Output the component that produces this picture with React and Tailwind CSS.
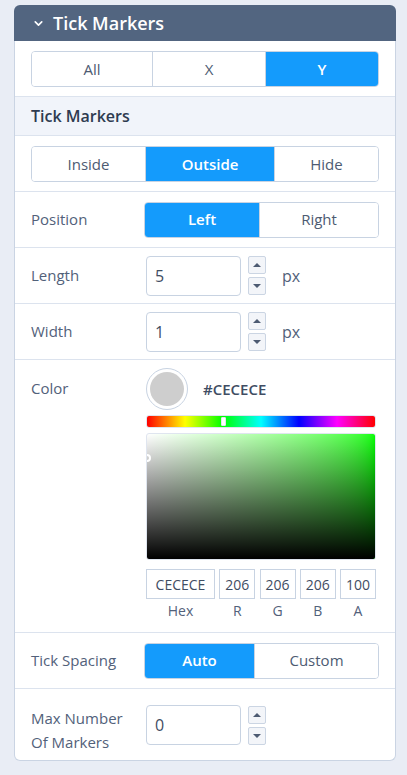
import { ChevronDown } from 'lucide-react';

const font = { fontFamily: '"Open Sans", "Liberation Sans", sans-serif' };

function Segmented({ options, active, widths }) {
  return (
    <div className="flex h-[36px] rounded-[4px] border border-[#c8d3e2] overflow-hidden">
      {options.map((opt, i) => (
        <div
          key={opt}
          className={`${widths[i]} flex items-center justify-center text-[15px] ${
            i > 0 ? 'border-l border-[#c8d3e2]' : ''
          } ${
            opt === active
              ? 'bg-[#149bfc] text-white font-semibold border-[#0d84dc]'
              : 'bg-white text-[#4d5b72]'
          }`}
        >
          {opt}
        </div>
      ))}
    </div>
  );
}

function Spinner() {
  return (
    <div className="flex flex-col gap-[3px]">
      <div className="w-[18px] h-[18px] flex items-center justify-center bg-[#f3f5f9] border border-[#cbd5e3] rounded-[2px]">
        <div className="w-0 h-0 border-x-[4px] border-x-transparent border-b-[4px] border-b-[#4d5b72]" />
      </div>
      <div className="w-[18px] h-[18px] flex items-center justify-center bg-[#f3f5f9] border border-[#cbd5e3] rounded-[2px]">
        <div className="w-0 h-0 border-x-[4px] border-x-transparent border-t-[4px] border-t-[#4d5b72]" />
      </div>
    </div>
  );
}

function NumberRow({ label, value, unit }) {
  return (
    <div className="flex items-center h-[56px] px-[16px] border-t border-[#dce3ee]">
      <div className="w-[115px] text-[15px] text-[#52617a]">{label}</div>
      <div className="w-[95px] h-[40px] border border-[#c8d3e2] rounded-[4px] flex items-center pl-[8px] text-[16px] text-[#3f4d63]">
        {value}
      </div>
      <div className="ml-[7px]">
        <Spinner />
      </div>
      {unit && <div className="ml-[16px] text-[16px] text-[#52617a]">{unit}</div>}
    </div>
  );
}

function ChannelBox({ value, label, w }) {
  return (
    <div className="flex flex-col items-center">
      <div className={`${w} h-[30px] border border-[#c8d3e2] flex items-center justify-center text-[14px] text-[#3f4d63]`}>
        {value}
      </div>
      <div className="mt-[3px] text-[14px] leading-[18px] text-[#52617a]">{label}</div>
    </div>
  );
}

export default function App() {
  return (
    <div className="min-h-[775px] bg-[#e9edf5] pt-[5px] pl-[14px]" style={font}>
      <div className="w-[382px]">
        <div className="h-[36px] bg-[#526580] rounded-t-[6px] flex items-center pl-[18px]">
          <ChevronDown className="w-[13px] h-[13px] text-white" strokeWidth={3} />
          <span className="ml-[8px] text-[18px] font-semibold text-white">Tick Markers</span>
        </div>
        <div className="bg-white border-x border-b border-[#cad4e3] rounded-b-[6px]">
          <div className="px-[16px] pt-[10px] pb-[9px]">
            <Segmented options={['All', 'X', 'Y']} active="Y" widths={['w-[120px]', 'w-[113px]', 'flex-1']} />
          </div>
          <div className="h-[39px] bg-[#f1f4fa] border-t border-[#dce3ee] flex items-center px-[16px] text-[16px] font-semibold text-[#2e3b50]">
            Tick Markers
          </div>
          <div className="px-[16px] pt-[10px] pb-[9px] border-t border-[#dce3ee]">
            <Segmented options={['Inside', 'Outside', 'Hide']} active="Outside" widths={['w-[113px]', 'w-[129px]', 'flex-1']} />
          </div>
          <div className="flex items-center h-[56px] px-[16px] border-t border-[#dce3ee]">
            <div className="w-[113px] text-[15px] text-[#52617a]">Position</div>
            <div className="flex-1">
              <Segmented options={['Left', 'Right']} active="Left" widths={['w-[114px]', 'flex-1']} />
            </div>
          </div>
          <NumberRow label="Length" value="5" unit="px" />
          <NumberRow label="Width" value="1" unit="px" />
          <div className="flex px-[16px] pt-[8px] pb-[12px] border-t border-[#dce3ee]">
            <div className="w-[115px] pt-[9px] text-[15px] text-[#52617a]">Color</div>
            <div className="w-[230px]">
              <div className="flex items-center">
                <div className="w-[42px] h-[42px] rounded-full border border-[#c8d3e2] flex items-center justify-center">
                  <div className="w-[34px] h-[34px] rounded-full bg-[#cecece]" />
                </div>
                <div className="ml-[15px] text-[15px] font-semibold text-[#3f4d63]">#CECECE</div>
              </div>
              <div className="relative mt-[5px] h-[13px] rounded-[3px] border border-[#dfe5ef] bg-[linear-gradient(to_right,#f00,#ff0,#0f0,#0ff,#00f,#f0f,#f00)]">
                <div className="absolute left-[74px] top-[1px] w-[5px] h-[9px] bg-white rounded-[1px] border border-[#dfe5ef]" />
              </div>
              <div className="relative mt-[5px] h-[127px] rounded-[3px] border border-[#dfe5ef] overflow-hidden bg-linear-to-r from-white to-[#00ff00]">
                <div className="absolute inset-0 bg-linear-to-t from-black to-transparent" />
                <div className="absolute left-[-4px] top-[20px] w-[8px] h-[8px] rounded-full border-2 border-white" />
              </div>
              <div className="flex justify-between mt-[9px]">
                <ChannelBox value="CECECE" label="Hex" w="w-[69px]" />
                <ChannelBox value="206" label="R" w="w-[36px]" />
                <ChannelBox value="206" label="G" w="w-[36px]" />
                <ChannelBox value="206" label="B" w="w-[36px]" />
                <ChannelBox value="100" label="A" w="w-[36px]" />
              </div>
            </div>
          </div>
          <div className="flex items-center h-[56px] px-[16px] border-t border-[#dce3ee]">
            <div className="w-[113px] text-[15px] text-[#52617a]">Tick Spacing</div>
            <div className="flex-1">
              <Segmented options={['Auto', 'Custom']} active="Auto" widths={['w-[109px]', 'flex-1']} />
            </div>
          </div>
          <div className="flex items-start h-[72px] px-[16px] pt-[16px] border-t border-[#dce3ee]">
            <div className="w-[115px] pt-[1px] text-[15px] leading-[24px] text-[#52617a]">
              Max Number
              <br />
              Of Markers
            </div>
            <div className="w-[95px] h-[40px] border border-[#c8d3e2] rounded-[4px] flex items-center pl-[8px] text-[16px] text-[#3f4d63]">
              0
            </div>
            <div className="ml-[7px] pt-[1px]">
              <Spinner />
            </div>
          </div>
        </div>
      </div>
    </div>
  );
}
